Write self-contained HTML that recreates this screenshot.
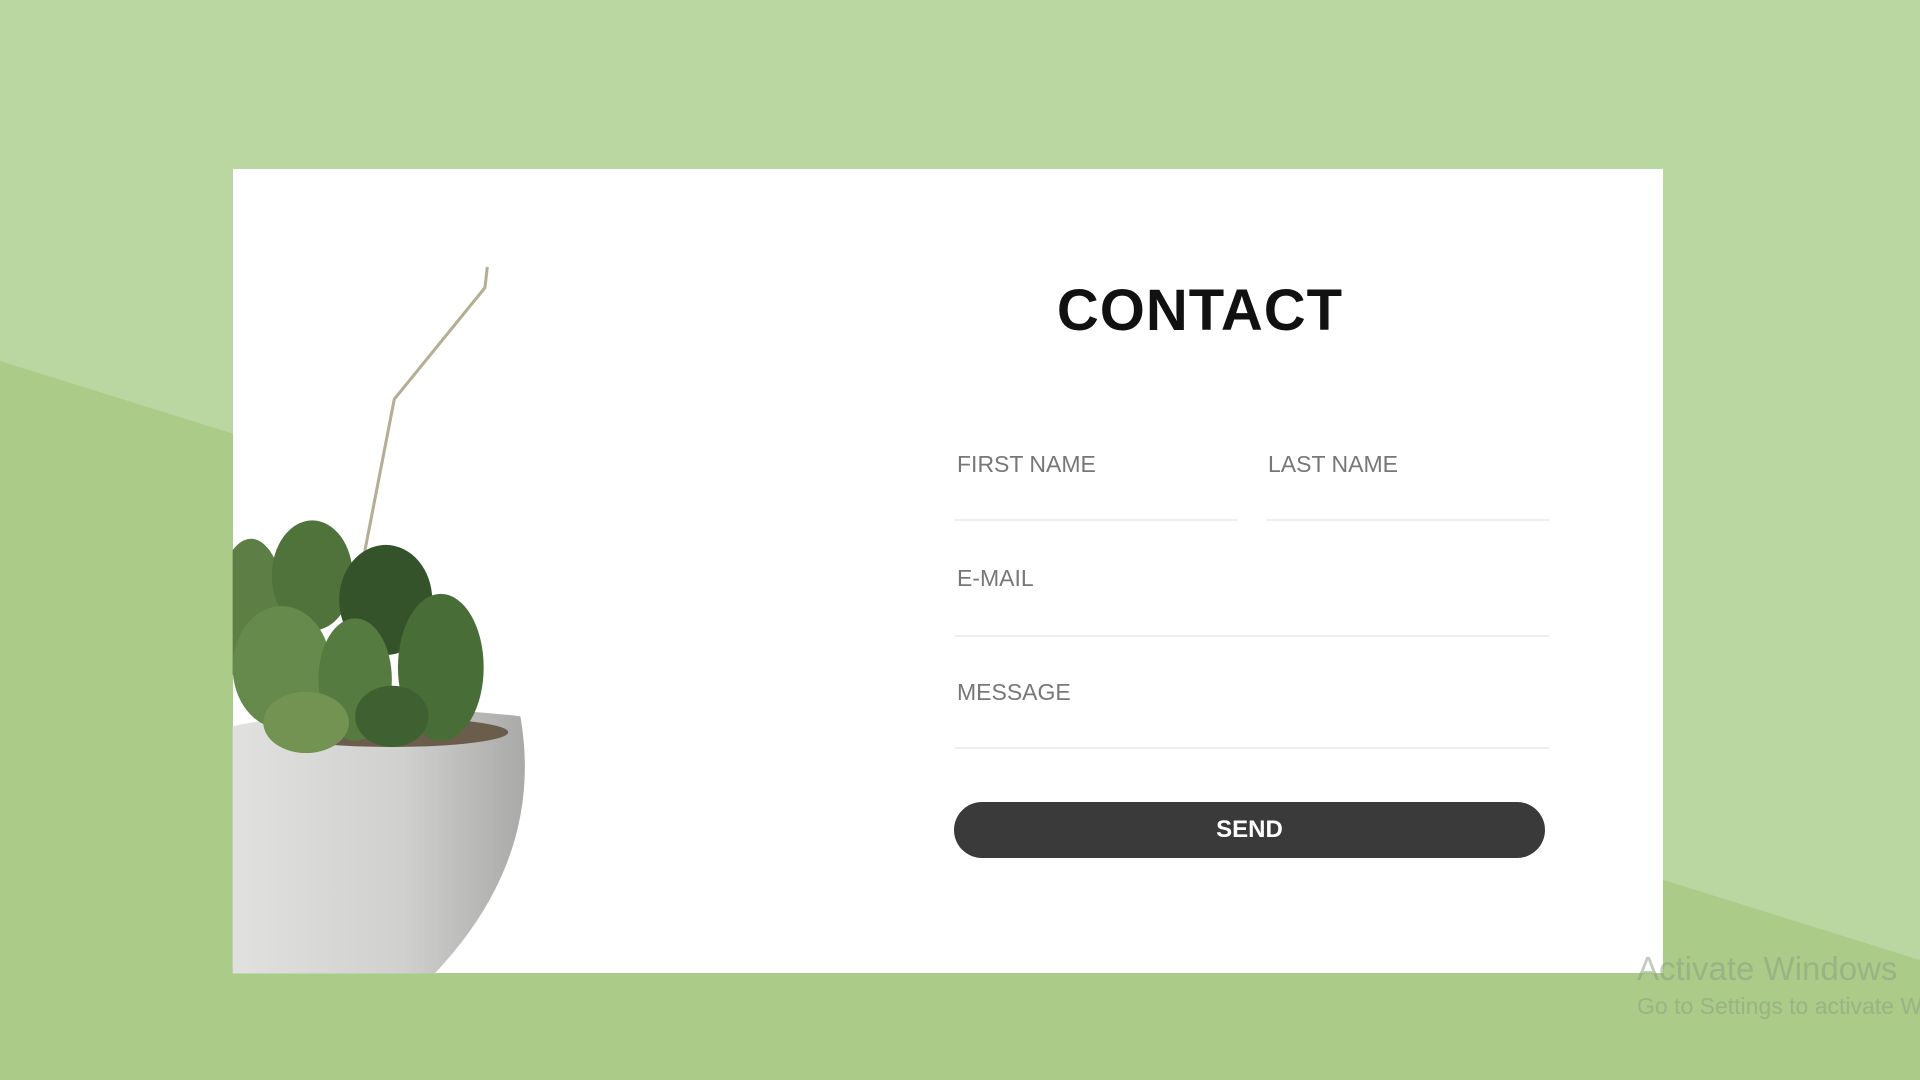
<!DOCTYPE html>
<html><head><meta charset="utf-8"><style>
html,body{margin:0;padding:0;width:1920px;height:1080px;overflow:hidden;background:#bad7a2;font-family:"Liberation Sans",Arial,sans-serif}
#bg{position:absolute;left:0;top:0}
.card{position:absolute;left:233px;top:169px;width:1430px;height:804px;background:#fff;overflow:hidden}
.plant{position:absolute;left:0;top:0}
.title{position:absolute;left:1020px;top:276px;width:360px;text-align:center;font-size:58px;font-weight:bold;color:#111;letter-spacing:1px;line-height:70px}
.lbl{position:absolute;font-size:23px;color:#777;line-height:26px}
.line{position:absolute;height:2px;background:#eee}
.btn{position:absolute;left:954px;top:802px;width:591px;height:56px;border-radius:28px;background:#3a3a3a;color:#fff;font-weight:bold;font-size:24px;text-align:center;line-height:56px}
.win{position:absolute;left:1637px;top:950px;color:rgba(140,160,130,0.55);font-size:33px;white-space:nowrap}
.win2{position:absolute;left:1637px;top:993px;color:rgba(140,160,130,0.55);font-size:23px;white-space:nowrap}
</style></head><body>
<svg id="bg" width="1920" height="1080"><polygon points="0,361 1920,960 1920,1080 0,1080" fill="#abcb88"/></svg>
<div class="card"></div>
<svg class="plant" width="1920" height="1080" viewBox="0 0 1568 882" preserveAspectRatio="none">
<defs><clipPath id="c"><rect x="190" y="138" width="1168" height="657"/></clipPath>
<linearGradient id="pot" x1="0" x2="1" y1="0" y2="0"><stop offset="0" stop-color="#e2e2e0"/><stop offset="0.6" stop-color="#d0d0ce"/><stop offset="1" stop-color="#a9a9a7"/></linearGradient></defs>
<g clip-path="url(#c)">
<path d="M398,218 L396,235 L322,326 L296,460" stroke="#b4ae94" stroke-width="2.5" fill="none"/>
<path d="M180,595 Q300,570 425,585 Q445,700 355,795 L180,795 Z" fill="url(#pot)"/>
<ellipse cx="320" cy="598" rx="95" ry="12" fill="#6b5d4c"/>
<ellipse cx="205" cy="500" rx="28" ry="60" fill="#5d7f45"/>
<ellipse cx="255" cy="470" rx="33" ry="45" fill="#4f733a"/>
<ellipse cx="315" cy="490" rx="38" ry="45" fill="#35532a"/>
<ellipse cx="230" cy="545" rx="40" ry="50" fill="#668a4c"/>
<ellipse cx="290" cy="555" rx="30" ry="50" fill="#567b40"/>
<ellipse cx="360" cy="545" rx="35" ry="60" fill="#486d37"/>
<ellipse cx="250" cy="590" rx="35" ry="25" fill="#729352"/>
<ellipse cx="320" cy="585" rx="30" ry="25" fill="#3f6131"/>
</g></svg>
<div class="title">CONTACT</div>
<div class="lbl" style="left:957px;top:451px">FIRST NAME</div>
<div class="lbl" style="left:1268px;top:451px">LAST NAME</div>
<div class="line" style="left:955px;top:519px;width:282px"></div>
<div class="line" style="left:1267px;top:519px;width:282px"></div>
<div class="lbl" style="left:957px;top:565px">E-MAIL</div>
<div class="line" style="left:955px;top:635px;width:594px"></div>
<div class="lbl" style="left:957px;top:679px">MESSAGE</div>
<div class="line" style="left:955px;top:747px;width:594px"></div>
<div class="btn">SEND</div>
<div class="win">Activate Windows</div>
<div class="win2">Go to Settings to activate Windows.</div>
</body></html>
